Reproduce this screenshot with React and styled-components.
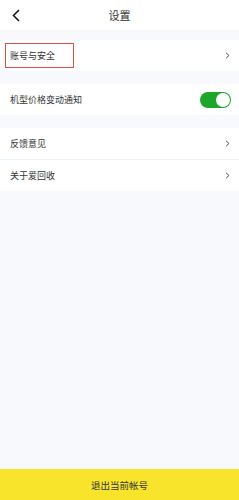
import React, { useState } from 'react';
import styled, { createGlobalStyle } from 'styled-components';

const GlobalStyle = createGlobalStyle`
  html, body {
    margin: 0;
    padding: 0;
  }
  body {
    font-family: 'Noto Sans CJK SC', 'Noto Sans', sans-serif;
    background: #f8f9fd;
  }
`;

const Page = styled.div`
  display: flex;
  flex-direction: column;
  min-height: 500px;
  background: #f8f9fd;
`;

const Header = styled.header`
  display: grid;
  grid-template-columns: 30px 1fr 30px;
  align-items: center;
  height: 30px;
  background: #fff;
`;

const BackButton = styled.button`
  display: flex;
  align-items: center;
  justify-content: center;
  padding: 0 0 0 2px;
  border: none;
  background: none;
  height: 30px;
  cursor: pointer;
`;

const Title = styled.h1`
  margin: 0;
  text-align: center;
  font-size: 11px;
  font-weight: 400;
  color: #333;
`;

const Group = styled.section`
  margin-top: ${({ $gap }) => $gap}px;
  background: #fff;
`;

const Row = styled.div`
  display: flex;
  align-items: center;
  justify-content: space-between;
  height: 31px;
  padding: 0 9px 0 10px;
  border-top: ${({ $divider }) => ($divider ? '1px solid #f0f1f4' : 'none')};
`;

const Label = styled.span`
  font-size: 9px;
  color: #333;
`;

// red annotation frame around the first row's label
const Marked = styled.span`
  display: inline-flex;
  align-items: center;
  height: 25px;
  width: 69px;
  box-sizing: border-box;
  margin-left: -5px;
  padding-left: 5px;
  box-shadow: inset 0 0 0 1px rgb(226, 80, 72);
`;

const Switch = styled.button`
  position: relative;
  width: 31px;
  height: 16px;
  padding: 0;
  border: none;
  border-radius: 8px;
  background: ${({ $on }) => ($on ? '#1ea62b' : '#dcdcdc')};
  cursor: pointer;
  margin-right: -1px;
`;

const Knob = styled.span`
  position: absolute;
  top: 1px;
  left: ${({ $on }) => ($on ? '16px' : '1px')};
  width: 14px;
  height: 14px;
  border-radius: 50%;
  background: #fff;
`;

const Footer = styled.button`
  margin-top: auto;
  height: 31px;
  border: none;
  background: #f9e42c;
  font-family: 'Noto Sans CJK SC', 'Noto Sans', sans-serif;
  font-size: 9.5px;
  color: #333;
  cursor: pointer;
`;

const Chevron = () => (
  <svg width="5" height="7" viewBox="0 0 5 7">
    <path d="M1 0.8 L4 3.5 L1 6.2" fill="none" stroke="#444" strokeWidth="0.9" />
  </svg>
);

const BackIcon = () => (
  <svg width="8" height="13" viewBox="0 0 8 13">
    <path d="M7 1 L1.5 6.5 L7 12" fill="none" stroke="#111" strokeWidth="1.5" />
  </svg>
);

export default function App() {
  const [notify, setNotify] = useState(true);

  return (
    <Page>
      <GlobalStyle />
      <Header>
        <BackButton aria-label="返回">
          <BackIcon />
        </BackButton>
        <Title>设置</Title>
        <span />
      </Header>

      <Group $gap={10}>
        <Row>
          <Marked>
            <Label>账号与安全</Label>
          </Marked>
          <Chevron />
        </Row>
      </Group>

      <Group $gap={13}>
        <Row>
          <Label>机型价格变动通知</Label>
          <Switch $on={notify} onClick={() => setNotify(!notify)}>
            <Knob $on={notify} />
          </Switch>
        </Row>
      </Group>

      <Group $gap={13}>
        <Row>
          <Label>反馈意见</Label>
          <Chevron />
        </Row>
        <Row $divider>
          <Label>关于爱回收</Label>
          <Chevron />
        </Row>
      </Group>

      <Footer>退出当前帐号</Footer>
    </Page>
  );
}
